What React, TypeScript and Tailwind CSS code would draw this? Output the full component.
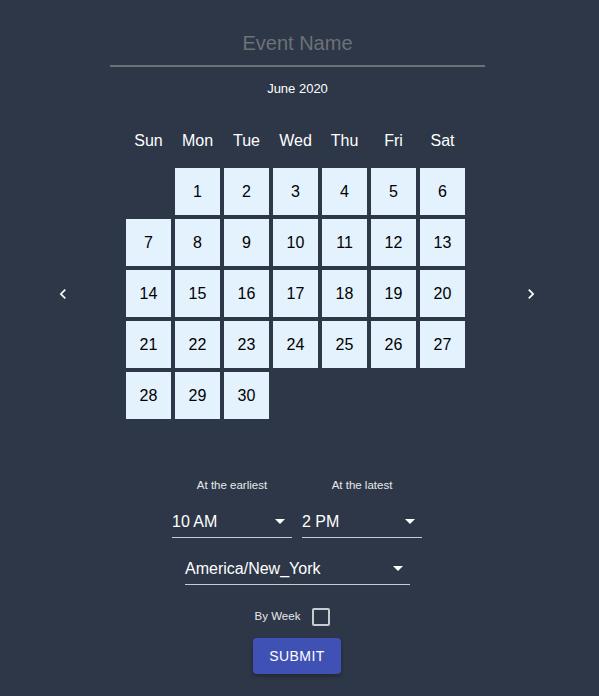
import React, { useState } from 'react';

const days = ['Sun', 'Mon', 'Tue', 'Wed', 'Thu', 'Fri', 'Sat'];

function Caret() {
  return (
    <svg width="10" height="5" viewBox="0 0 10 5" className="shrink-0">
      <path d="M0 0h10L5 5z" fill="#ffffff" />
    </svg>
  );
}

function Chevron({ dir }: { dir: 'left' | 'right' }) {
  return (
    <button className="w-[24px] h-[24px] flex items-center justify-center text-white">
      <svg width="20" height="20" viewBox="0 0 24 24" fill="currentColor">
        {dir === 'left' ? (
          <path d="M15.41 7.41L14 6l-6 6 6 6 1.41-1.41L10.83 12z" />
        ) : (
          <path d="M10 6L8.59 7.41 13.17 12l-4.58 4.59L10 18l6-6z" />
        )}
      </svg>
    </button>
  );
}

function Select({ value, width }: { value: string; width: string }) {
  return (
    <div className={`${width} h-[33px] flex items-center justify-between border-b border-[#c8cbd0] text-white text-[16px] pt-[1px] pr-[7px]`}>
      <span>{value}</span>
      <Caret />
    </div>
  );
}

export default function App() {
  const [name, setName] = useState('');
  // June 2020 starts on a Monday
  const cells: (number | null)[] = [null, ...Array.from({ length: 30 }, (_, i) => i + 1)];

  return (
    <div className="min-h-screen bg-[#2d3748] flex flex-col items-center font-['Liberation_Sans',Arial,sans-serif] text-white">
      <div className="pt-[27px] pr-[4px]">
        <input
          value={name}
          onChange={(e) => setName(e.target.value)}
          placeholder="Event Name"
          className="w-[375px] h-[40px] pb-[6px] bg-transparent border-b-2 border-[#6b717b] text-center text-[20px] text-white placeholder:text-[#6e7176] outline-none"
        />
      </div>

      <div className="mt-[14px] text-[13px] leading-[16px] pr-[4px]">June 2020</div>

      <div className="mt-[32px] grid grid-cols-[repeat(7,45px)] gap-x-[4px] pr-[8px]">
        {days.map((d) => (
          <div key={d} className="text-center text-[16px] leading-[24px]">{d}</div>
        ))}
      </div>

      <div className="mt-[15px] w-full flex items-center justify-center pr-[5px]">
        <Chevron dir="left" />
        <div className="ml-[51px] mr-[54px] grid grid-cols-[repeat(7,45px)] auto-rows-[47px] gap-[4px]">
          {cells.map((c, i) =>
            c === null ? (
              <div key={i} />
            ) : (
              <button key={i} className="bg-[#e3f2fd] text-black text-[16px] flex items-center justify-center">
                {c}
              </button>
            )
          )}
        </div>
        <Chevron dir="right" />
      </div>

      <div className="mt-[59px] flex gap-[10px] pr-[5px]">
        <div className="flex flex-col items-center">
          <span className="text-[11.5px] leading-[14px] text-[#e8e8e8]">At the earliest</span>
          <div className="mt-[13px]">
            <Select value="10 AM" width="w-[120px]" />
          </div>
        </div>
        <div className="flex flex-col items-center">
          <span className="text-[11.5px] leading-[14px] text-[#e8e8e8]">At the latest</span>
          <div className="mt-[13px]">
            <Select value="2 PM" width="w-[120px]" />
          </div>
        </div>
      </div>

      <div className="mt-[14px] pr-[4px]">
        <Select value="America/New_York" width="w-[225px]" />
      </div>

      <div className="mt-[23px] flex items-center gap-[12px] pr-[14px]">
        <span className="text-[11.5px] text-[#e8e8e8]">By Week</span>
        <span className="w-[18px] h-[18px] border-2 border-[#c8cbd0] rounded-[2px]" />
      </div>

      <button className="mt-[12px] mr-[5px] w-[88px] h-[36px] bg-[#3f51b5] rounded-[4px] text-[14px] font-medium tracking-[0.4px] uppercase shadow-[0_2px_4px_rgba(0,0,0,0.3)]">
        Submit
      </button>
    </div>
  );
}
